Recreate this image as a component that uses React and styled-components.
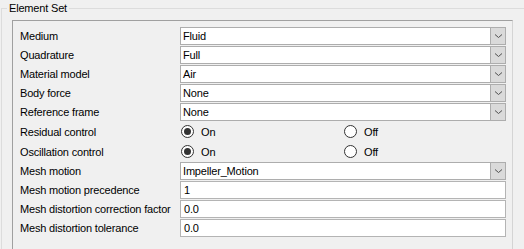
import React from 'react'
import styled, { createGlobalStyle } from 'styled-components'

const GlobalStyle = createGlobalStyle`
    html, body {
        margin: 0;
        padding: 0;
        background: #f0f0f0;
        overflow: hidden;
    }
    body {
        font-family: "Liberation Sans", Arial, sans-serif;
        font-size: 11px;
        letter-spacing: -0.18px;
        color: #000;
    }
`

const GroupBox = styled.fieldset`
    box-sizing: border-box;
    width: 523px;
    height: 249px;
    margin: 0 0 0 1px;
    padding: 0;
    border: 1px solid #dcdcdc;
    border-right: none;
    border-bottom: none;
`

const Legend = styled.legend`
    margin-left: 5px;
    padding: 0 2px;
    height: 16px;
    line-height: 16px;
    font-size: 11px;
`

const Panel = styled.div`
    box-sizing: border-box;
    width: 501px;
    height: 229px;
    margin: 4px 0 0 10px;
    padding: 6px 6px 0 7px;
    border: 1px solid #a0a0a0;
    border-right-color: #d4d4d4;
    border-bottom: none;
`

const Form = styled.div`
    display: grid;
    grid-template-columns: 160px 1fr;
    row-gap: 1px;
`

const Label = styled.div`
    display: flex;
    align-items: center;
    height: ${p => p.$h}px;
    white-space: nowrap;
`

const ComboBox = styled.div`
    box-sizing: border-box;
    display: flex;
    align-items: stretch;
    height: 18px;
    background: #fff;
    border: 1px solid #adadad;
`

const ComboText = styled.div`
    flex: 1;
    display: flex;
    align-items: center;
    padding-left: 2px;
`

const DropButton = styled.div`
    box-sizing: border-box;
    width: 16px;
    display: flex;
    align-items: center;
    justify-content: center;
    background: #dadada;
    border: 1px solid #adadad;
    margin: -1px -1px -1px 0;
`

const TextBox = styled.div`
    box-sizing: border-box;
    display: flex;
    align-items: center;
    height: 18px;
    padding-left: 3px;
    background: #fff;
    border: 1px solid #b4b4b4;
`

const RadioGroup = styled.div`
    display: grid;
    grid-template-columns: 163px 1fr;
    height: 19px;
`

const RadioOption = styled.div`
    display: flex;
    align-items: center;
    gap: 7px;
    padding-left: 1px;
`

const RadioCircle = styled.span`
    box-sizing: border-box;
    width: 13px;
    height: 13px;
    border-radius: 50%;
    border: 1px solid #333;
    background: #fff;
    display: flex;
    align-items: center;
    justify-content: center;
    &::after {
        content: "";
        width: 7px;
        height: 7px;
        border-radius: 50%;
        background: #333;
        display: ${p => (p.$checked ? 'block' : 'none')};
    }
`

const Chevron = () => (
    <svg width="9" height="6" viewBox="0 0 9 6">
        <path d="M1 1.5 L4.5 4.5 L8 1.5" fill="none" stroke="#505050" strokeWidth="1" />
    </svg>
)

const rows = [
    { label: 'Medium', type: 'combo', value: 'Fluid' },
    { label: 'Quadrature', type: 'combo', value: 'Full' },
    { label: 'Material model', type: 'combo', value: 'Air' },
    { label: 'Body force', type: 'combo', value: 'None' },
    { label: 'Reference frame', type: 'combo', value: 'None' },
    { label: 'Residual control', type: 'radio', value: 'On' },
    { label: 'Oscillation control', type: 'radio', value: 'On' },
    { label: 'Mesh motion', type: 'combo', value: 'Impeller_Motion' },
    { label: 'Mesh motion precedence', type: 'text', value: '1' },
    { label: 'Mesh distortion correction factor', type: 'text', value: '0.0' },
    { label: 'Mesh distortion tolerance', type: 'text', value: '0.0' },
]

function Field({ row }) {
    if (row.type === 'combo') {
        return (
            <ComboBox>
                <ComboText>{row.value}</ComboText>
                <DropButton><Chevron /></DropButton>
            </ComboBox>
        )
    }
    if (row.type === 'radio') {
        return (
            <RadioGroup>
                <RadioOption>
                    <RadioCircle $checked={row.value === 'On'} />
                    On
                </RadioOption>
                <RadioOption>
                    <RadioCircle $checked={row.value === 'Off'} />
                    Off
                </RadioOption>
            </RadioGroup>
        )
    }
    return <TextBox>{row.value}</TextBox>
}

export default function App() {
    return (
        <>
            <GlobalStyle />
            <GroupBox>
                <Legend>Element Set</Legend>
                <Panel>
                    <Form>
                        {rows.map(row => (
                            <React.Fragment key={row.label}>
                                <Label $h={row.type === 'radio' ? 19 : 18}>{row.label}</Label>
                                <Field row={row} />
                            </React.Fragment>
                        ))}
                    </Form>
                </Panel>
            </GroupBox>
        </>
    )
}
